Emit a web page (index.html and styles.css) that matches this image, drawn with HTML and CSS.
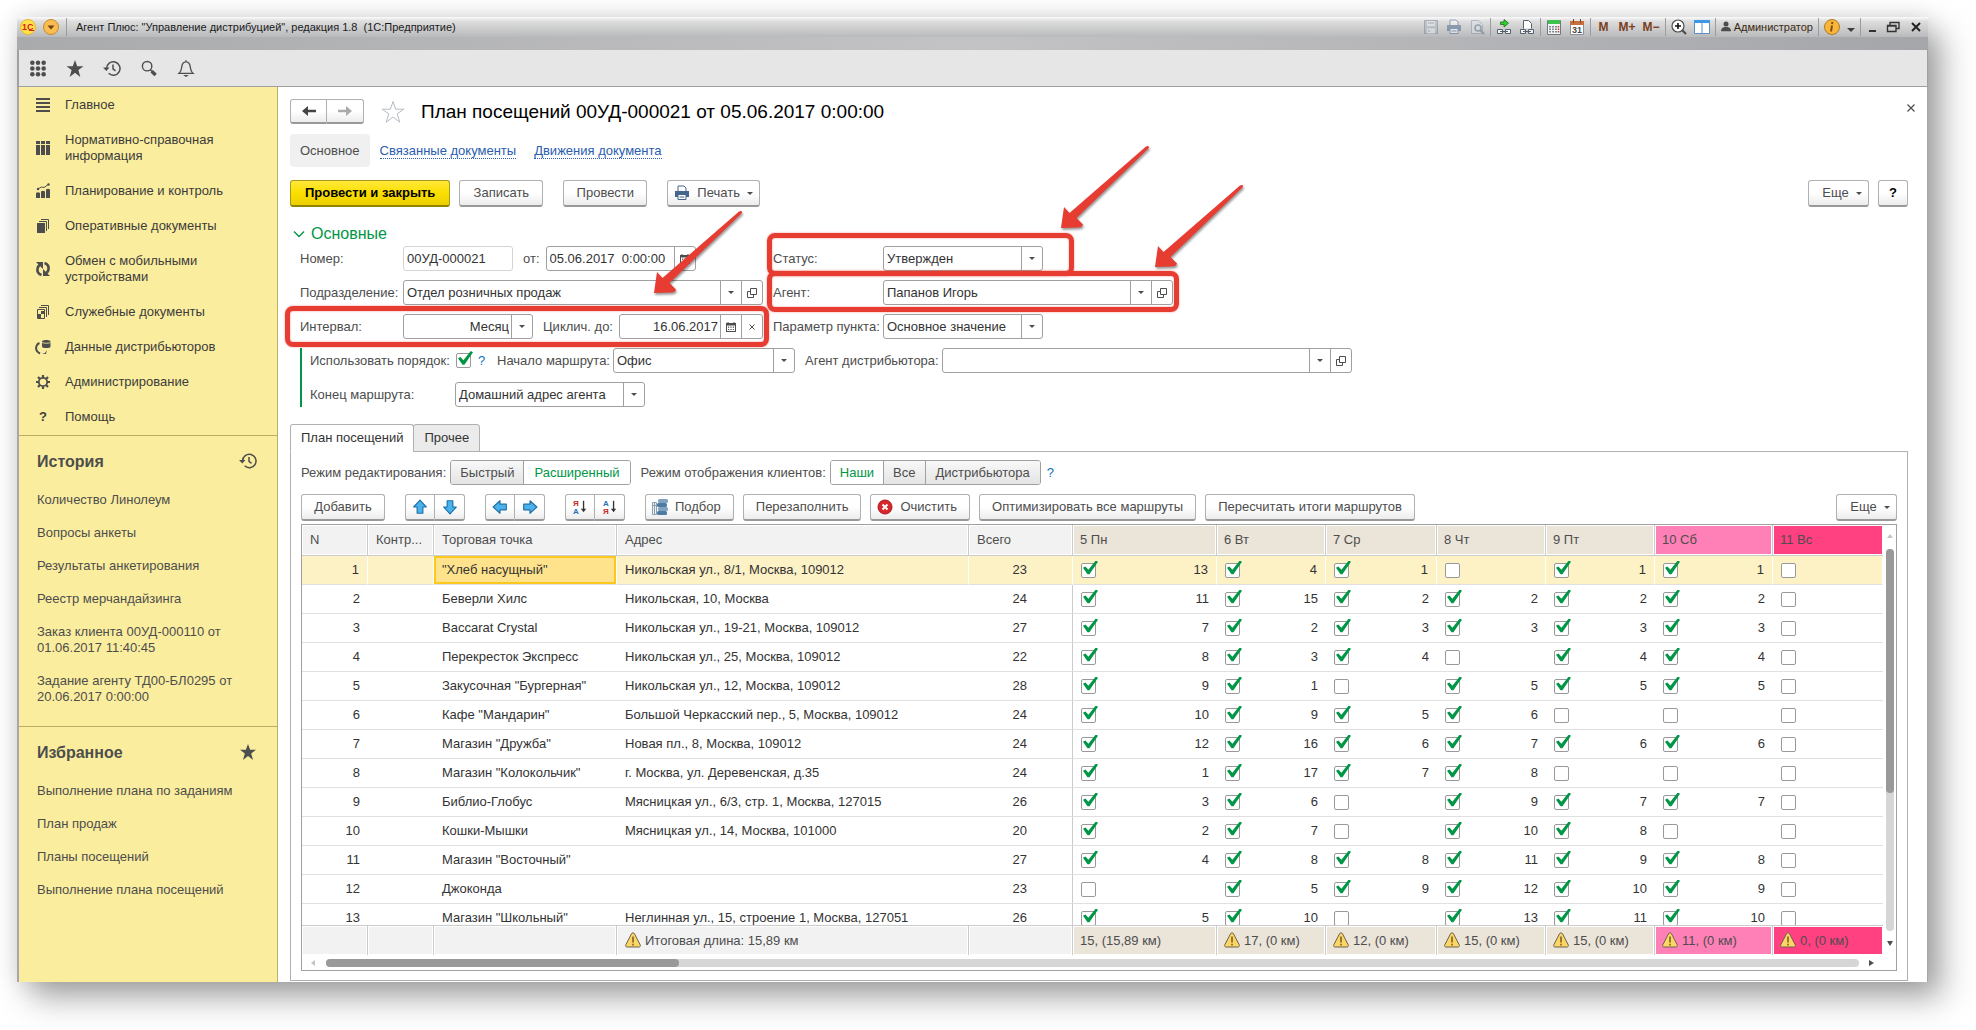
FILE: index.html
```html
<!DOCTYPE html>
<html lang="ru">
<head>
    <meta charset="UTF-8">
    <meta name="viewport" content="width=device-width, initial-scale=1.0">
    <title>Агент Плюс: "Управление дистрибуцией"</title>
    <link rel="stylesheet" href="styles.css">
</head>
<body>
    <!-- Общие иконки -->
    <svg class="sprite" aria-hidden="true">
        <symbol id="i-star" viewBox="0 0 16 16"><path d="M8 0l2.1 5.8H16l-4.8 3.7L13 16l-5-4-5 4 1.800-6.500L0 5.800h5.900z" fill="#4d4d4d"/></symbol>
        <symbol id="i-history" viewBox="0 0 18 16"><g fill="none" stroke="#4d4d4d" stroke-width="1.500"><path d="M3.600 8a6.700 6.700 0 1 1 2 4.800"/><path d="M10 4v4.300l2.500 2"/></g><path d="M0 7h6.500L3.300 10.500z" fill="#4d4d4d"/></symbol>
        <symbol id="i-open" viewBox="0 0 10 10"><path d="M3.500.5h6v6h-6zM3 3.500H.5v6h6V7" fill="none" stroke="#4d4d4d"/></symbol>
        <symbol id="i-cal" viewBox="0 0 10 10"><path d="M0 1h1.500V0h1v1h5V0h1v1H10v9H0z" fill="#4d4d4d"/><path d="M1 3.500h8V9H1z" fill="#fff"/><path d="M2 4.500h1.200v1.200H2zM4.400 4.500h1.200v1.200H4.400zM6.800 4.500H8v1.200H6.800zM2 6.900h1.200v1.200H2zM4.400 6.900h1.200v1.200H4.400zM6.800 6.900H8v1.200H6.800z" fill="#4d4d4d"/></symbol>
        <symbol id="i-warn" viewBox="0 0 16 16"><path d="M8 .8c.7 0 1.200.4 1.500 1l5.700 11c.6 1.200 0 2.200-1.300 2.200H2.100c-1.300 0-1.900-1-1.300-2.200l5.700-11c.3-.6.800-1 1.500-1z" fill="#fcd565" stroke="#6b6250"/><path d="M8 4.500v6M8 11.800v1.600" stroke="#5d4a14" stroke-width="1.300"/></symbol>
        <symbol id="i-up" viewBox="0 0 14 14"><path d="M7 1l5.500 6H9.500v5.500h-5V7h-3z" fill="#4ab3ee" stroke="#1e6fa3" stroke-linejoin="round"/></symbol>
        <symbol id="i-print" viewBox="0 0 16 16"><path d="M4 6V1h6l2 2v3" fill="#fff" stroke="#44668c"/><path d="M1 6h14v6H1z" fill="#44668c"/><path d="M4 9.500h8v5H4z" fill="#fff" stroke="#44668c"/><path d="M5.500 12h5" stroke="#44668c"/></symbol>
        <symbol id="i-arrow" viewBox="0 0 92 92"><path d="M2 85l3-21 5.500 6L87 3.500c2-1.500 4 0 2.500 2L17.500 75l6.500 6.500c-.5 2-2 3-5 3z" fill="#e63c32"/></symbol>
    </svg>

    <div class="window">
        <header class="titlebar">
            <svg class="logo" viewBox="0 0 16 16"><circle cx="8" cy="8" r="7.500" fill="#ffe14a" stroke="#e8b92c"/><text x="2" y="11" class="brand">1С</text><path d="M9 11.500h5" stroke="#d8201c"/></svg>
            <svg class="logo" viewBox="0 0 16 16"><circle cx="8" cy="8" r="7.500" fill="#f9bd52" stroke="#c98b2b"/><path d="M4.500 6.500h7L8 10.500z" fill="#6b4416"/></svg>
            <span class="sep"></span>
            <span class="caption">Агент Плюс: "Управление дистрибуцией", редакция 1.8&nbsp; (1С:Предприятие)</span>
            <div class="sys">
                <svg viewBox="0 0 16 16" opacity=".55"><path d="M1.500 1.500h13v13h-13z" fill="#a9b4bf" stroke="#75828f"/><path d="M4 2h8v5H4zM4 9.500h8v5H4z" fill="#e3e8ec"/><path d="M5 4h6M5 12h2" stroke="#75828f"/></svg>
                <svg viewBox="0 0 16 16" opacity=".5"><use href="#i-print"/></svg>
                <svg viewBox="0 0 16 16" opacity=".55"><path d="M2.500 1.500h7l4 4v9h-11z" fill="#dde2e6" stroke="#8d99a5"/><circle cx="9" cy="9" r="3" fill="none" stroke="#61788f" stroke-width="1.500"/><path d="M11 11l4 4" stroke="#61788f" stroke-width="2"/></svg>
                <span class="sep"></span>
                <svg viewBox="0 0 16 16"><path d="M4.500 3H8V.5l4.500 3.700L8 8V5.500H4.500z" fill="#2fd02f" stroke="#147014" stroke-width=".8"/><path d="M1.500 10.500h5v4h-5zM9.500 10.500h5v4h-5zM4 12.500h8" fill="#f4f7fa" stroke="#55616d"/></svg>
                <svg viewBox="0 0 16 16"><path d="M4.500 9.500v-8h5l3 3v5" fill="#fff" stroke="#55616d"/><path d="M1.500 10.500h5v4h-5zM9.500 10.500h5v4h-5zM4 12.500h8" fill="#f4f7fa" stroke="#55616d"/></svg>
                <span class="sep"></span>
                <svg viewBox="0 0 16 16"><path d="M1.500 1.500h13v14h-13z" fill="#f4f4f4" stroke="#6f7a80"/><path d="M2 1h12v4H2z" fill="#3fc24b"/><path d="M4 7v7M7 7v7M10 7v7" stroke="#59656f" stroke-width="1.500" stroke-dasharray="1.500 1"/><path d="M12.500 7v7" stroke="#c43c2c" stroke-width="1.500" stroke-dasharray="1.500 1"/></svg>
                <svg viewBox="0 0 16 16"><path d="M1.500 2.500h13v13h-13z" fill="#fff" stroke="#8a8f94"/><path d="M1 2h14v4H1z" fill="#c86f3d"/><path d="M4.500 0v4M11.500 0v4" stroke="#7b4427"/><text x="3" y="14" class="day">31</text></svg>
                <span class="sep"></span>
                <button type="button" class="mem">M</button>
                <button type="button" class="mem">M+</button>
                <button type="button" class="mem">M−</button>
                <span class="sep"></span>
                <svg viewBox="0 0 16 16"><circle cx="7" cy="7" r="6" fill="#fff" stroke="#4b4b4b" stroke-width="1.200"/><path d="M7 4v6M4 7h6" stroke="#111" stroke-width="1.600"/><path d="M11 11l4 4" stroke="#4b4b4b" stroke-width="2.200"/></svg>
                <svg viewBox="0 0 16 16"><path d="M.5 1.500h15v13H.5z" fill="#fff" stroke="#5e8fc0"/><path d="M0 1h16v3H0z" fill="#3c97e6"/><path d="M8 4v11" stroke="#5e8fc0"/></svg>
                <span class="sep"></span>
                <span class="user"><svg viewBox="0 0 12 14"><circle cx="6" cy="3.500" r="3" fill="#4c4c4c"/><path d="M0 12c0-3 2-4.500 4-5h4c2 .5 4 2 4 5z" fill="#4c4c4c"/></svg>Администратор</span>
                <span class="sep"></span>
                <svg viewBox="0 0 16 16"><circle cx="8" cy="8" r="7.500" fill="#f7b63e" stroke="#b57a1c"/><path d="M8.500 3L8 5M8 6.500L7 12.500" stroke="#8a4d09" stroke-width="2"/></svg>
                <svg class="tiny" viewBox="0 0 8 16"><path d="M0 9h8l-4 4z" fill="#3f3f3f"/></svg>
                <span class="sep"></span>
                <svg class="min" viewBox="0 0 12 16"><path d="M3 12h7" stroke="#333" stroke-width="2"/></svg>
                <svg viewBox="0 0 16 16"><path d="M5 6V3.500h9v6h-3M2.500 6.500h8.500v6H2.500zM2 7h9" fill="none" stroke="#333" stroke-width="1.400"/></svg>
                <svg viewBox="0 0 16 16"><path d="M4 4l8 8M12 4l-8 8" stroke="#222" stroke-width="2"/></svg>
            </div>
        </header>
        <div class="band"></div>

        <div class="topbar">
            <svg viewBox="0 0 18 18" fill="#4d4d4d"><circle cx="3" cy="3" r="2.400"/><circle cx="9" cy="3" r="2.400"/><circle cx="15" cy="3" r="2.400"/><circle cx="3" cy="9" r="2.400"/><circle cx="9" cy="9" r="2.400"/><circle cx="15" cy="9" r="2.400"/><circle cx="3" cy="15" r="2.400"/><circle cx="9" cy="15" r="2.400"/><circle cx="15" cy="15" r="2.400"/></svg>
            <svg viewBox="0 0 16 16"><use href="#i-star"/></svg>
            <svg viewBox="0 0 18 16"><use href="#i-history"/></svg>
            <svg viewBox="0 0 18 18"><circle cx="7" cy="6.500" r="5" fill="none" stroke="#4d4d4d" stroke-width="1.500"/><path d="M10.500 10.200l2 2" stroke="#4d4d4d" stroke-width="1.500"/><path d="M11.800 11.800l4.200 4" stroke="#4d4d4d" stroke-width="3.600"/></svg>
            <svg viewBox="0 0 18 18"><path d="M1.500 14.200h15c-2-1.700-2.600-3.200-2.900-6.200C13.300 4.500 11.500 2 9 2S4.700 4.500 4.400 8c-.3 3-.9 4.500-2.900 6.200zM9 2V.2" fill="none" stroke="#4d4d4d" stroke-width="1.400"/><path d="M6 16h6l-3 2z" fill="#4d4d4d"/></svg>
        </div>

        <div class="workspace">
            <aside class="sidebar">
                <nav class="menu">
                    <a href="#"><svg viewBox="0 0 16 16"><path d="M1 2h14M1 6h14M1 10h14M1 14h14" stroke="#4d4d4d" stroke-width="2"/></svg>Главное</a>
                    <a href="#"><svg viewBox="0 0 16 16"><path d="M1 1h4v3H1zM6 1h4v3H6zM11 1h4v3h-4zM1 5h4v10H1zM6 5h4v10H6zM11 5h4v10h-4z" fill="#4d4d4d"/></svg>Нормативно-справочная информация</a>
                    <a href="#"><svg viewBox="0 0 16 16"><path d="M1 10q2-1.500 4 0v5H1zM6 8.500q2-1.500 4 0V15H6zM11 6.500q2-1.500 4 0V15h-4z" fill="#4d4d4d"/><path d="M2 6.500L6.500 4 9 4.500 14 1" fill="none" stroke="#4d4d4d"/><circle cx="3" cy="6" r="1.200" fill="#4d4d4d"/><circle cx="13.500" cy="1.500" r="1.200" fill="#4d4d4d"/></svg>Планирование и контроль</a>
                    <a href="#"><svg viewBox="0 0 16 16"><path d="M2 5h8v10H2z" fill="#4d4d4d"/><path d="M4 3.500h7.500V13M6 1.500h7.500V11" fill="none" stroke="#4d4d4d"/></svg>Оперативные документы</a>
                    <a href="#"><svg viewBox="0 0 16 16"><path d="M6.500 14C3.500 13 2 10.500 2.500 7.500 2.700 6 3.500 5 4.500 4M9.500 2c3 1 4.500 3.500 4 6.500-.2 1.500-1 2.500-2 3.500" fill="none" stroke="#4d4d4d" stroke-width="2.600"/><path d="M1 1h7v7zM15 15H8V8z" fill="#4d4d4d"/></svg>Обмен с мобильными устройствами</a>
                    <a href="#"><svg viewBox="0 0 16 16"><path d="M2.500 5.500h7v9h-7zM4 3.500h7.500V13M6 1.500h7.500V11" fill="none" stroke="#4d4d4d"/><path d="M3 10h3v4H3zM6 7h3v3H6z" fill="#4d4d4d"/></svg>Служебные документы</a>
                    <a href="#"><svg viewBox="0 0 16 16"><path d="M5 14.500C2 13 .5 10 1.500 7 2 5.500 3 4.500 4.500 4" fill="none" stroke="#4d4d4d" stroke-width="2"/><path d="M7 2.500C7 .5 15.500.5 15.500 2.500v5c0 2-8.500 2-8.500 0zM12 11l-1 4H7l3-1z" fill="#4d4d4d"/><path d="M7 3.500c2 1 6.500 1 8.500 0" stroke="#fbed9e" fill="none" stroke-width=".8"/></svg>Данные дистрибьюторов</a>
                    <a href="#"><svg viewBox="0 0 16 16"><circle cx="8" cy="8" r="4.200" fill="none" stroke="#4d4d4d" stroke-width="1.800"/><path d="M8 1v2.500M8 12.500V15M1 8h2.500M12.500 8H15M3 3l2 2M11 11l2 2M3 13l2-2M11 5l2-2" stroke="#4d4d4d" stroke-width="2.200"/></svg>Администрирование</a>
                    <a href="#"><b class="q">?</b>Помощь</a>
                </nav>
                <section class="links">
                    <h2>История <svg viewBox="0 0 18 16"><use href="#i-history"/></svg></h2>
                    <a href="#">Количество Линолеум</a>
                    <a href="#">Вопросы анкеты</a>
                    <a href="#">Результаты анкетирования</a>
                    <a href="#">Реестр мерчандайзинга</a>
                    <a href="#">Заказ клиента 00УД-000110 от 01.06.2017 11:40:45</a>
                    <a href="#">Задание агенту ТД00-БЛ0295 от 20.06.2017 0:00:00</a>
                </section>
                <section class="links">
                    <h2>Избранное <svg viewBox="0 0 16 16"><use href="#i-star"/></svg></h2>
                    <a href="#">Выполнение плана по заданиям</a>
                    <a href="#">План продаж</a>
                    <a href="#">Планы посещений</a>
                    <a href="#">Выполнение плана посещений</a>
                </section>
            </aside>

            <main class="doc">
                <div class="doc-head">
                    <div class="group nav-group">
                        <button type="button" class="btn" aria-label="Назад"><svg viewBox="0 0 16 12"><path d="M1 6l6-5v3.800h8v2.400H7V11z" fill="#444"/></svg></button>
                        <button type="button" class="btn" aria-label="Вперед"><svg viewBox="0 0 16 12"><path d="M15 6L9 1v3.800H1v2.400h8V11z" fill="#aaa"/></svg></button>
                    </div>
                    <svg class="fav" viewBox="0 0 24 24"><path d="M12 1.500l2.600 7.700h8.200l-6.600 4.700 2.600 8.300L12 17l-6.800 5.200 2.600-8.300L1.200 9.200h8.200z" fill="#fff" stroke="#b4bcc4"/></svg>
                    <h1>План посещений 00УД-000021 от 05.06.2017 0:00:00</h1>
                    <button type="button" class="close" aria-label="Закрыть"><svg viewBox="0 0 8 8"><path d="M.5.5l7 7M7.500.5l-7 7" stroke="#4d4d4d" stroke-width="1.200"/></svg></button>
                </div>

                <nav class="doc-links">
                    <span class="current">Основное</span>
                    <a href="#">Связанные документы</a>
                    <a href="#">Движения документа</a>
                </nav>

                <div class="commands">
                    <button type="button" class="btn primary">Провести и закрыть</button>
                    <button type="button" class="btn w84">Записать</button>
                    <button type="button" class="btn w84 gap">Провести</button>
                    <button type="button" class="btn gap print"><svg viewBox="0 0 16 16"><use href="#i-print"/></svg>Печать<i class="caret"></i></button>
                    <button type="button" class="btn more">Еще<i class="caret"></i></button>
                    <button type="button" class="btn help">?</button>
                </div>

                <h3 class="group-title"><svg viewBox="0 0 12 8"><path d="M1 1.500l5 5 5-5" fill="none" stroke="#009646" stroke-width="1.400"/></svg>Основные</h3>

                <div class="form">
                    <div class="columns">
                        <div class="col-left">
                            <div class="row">
                                <label for="num">Номер:</label>
                                <div class="field light w110"><input id="num" value="00УД-000021"></div>
                                <label for="date" class="short">от:</label>
                                <div class="field w150"><input id="date" value="05.06.2017&nbsp; 0:00:00"><button type="button" aria-label="Календарь"><svg viewBox="0 0 10 10"><use href="#i-cal"/></svg></button></div>
                            </div>
                            <div class="row">
                                <label for="dept">Подразделение:</label>
                                <div class="field grow"><input id="dept" value="Отдел розничных продаж"><button type="button" aria-label="Выбрать"><i class="caret"></i></button><button type="button" aria-label="Открыть"><svg viewBox="0 0 10 10"><use href="#i-open"/></svg></button></div>
                            </div>
                            <div class="row">
                                <label for="interval">Интервал:</label>
                                <div class="field w130 right"><select id="interval"><option>Месяц</option></select><span class="drop"><i class="caret"></i></span></div>
                                <label for="until" class="short">Циклич. до:</label>
                                <div class="field grow right"><input id="until" value="16.06.2017"><button type="button" aria-label="Календарь"><svg viewBox="0 0 10 10"><use href="#i-cal"/></svg></button><button type="button" aria-label="Очистить"><svg class="x" viewBox="0 0 8 8"><path d="M1.500 1.500l5 5M6.500 1.500l-5 5" stroke="#4d4d4d"/></svg></button></div>
                            </div>
                            <div class="mark mark-interval"></div>
                            <svg class="pointer pointer-interval" viewBox="0 0 92 92"><use href="#i-arrow"/></svg>
                        </div>
                        <div class="col-right">
                            <div class="row">
                                <label for="status">Статус:</label>
                                <div class="field w160"><select id="status"><option>Утвержден</option></select><span class="drop"><i class="caret"></i></span></div>
                            </div>
                            <div class="row">
                                <label for="agent">Агент:</label>
                                <div class="field w290"><input id="agent" value="Папанов Игорь"><button type="button" aria-label="Выбрать"><i class="caret"></i></button><button type="button" aria-label="Открыть"><svg viewBox="0 0 10 10"><use href="#i-open"/></svg></button></div>
                            </div>
                            <div class="row">
                                <label for="param">Параметр пункта:</label>
                                <div class="field w160"><select id="param"><option>Основное значение</option></select><span class="drop"><i class="caret"></i></span></div>
                            </div>
                            <div class="mark mark-status"></div>
                            <div class="mark mark-agent"></div>
                            <svg class="pointer pointer-status" viewBox="0 0 92 92"><use href="#i-arrow"/></svg>
                            <svg class="pointer pointer-agent" viewBox="0 0 92 92"><use href="#i-arrow"/></svg>
                        </div>
                    </div>
                    <div class="order">
                        <div class="row">
                            <label for="order" class="wide check">Использовать порядок:</label>
                            <input type="checkbox" id="order" checked>
                            <a href="#" class="hint">?</a>
                            <label for="start" class="start">Начало маршрута:</label>
                            <div class="field w182"><select id="start"><option>Офис</option></select><span class="drop"><i class="caret"></i></span></div>
                            <label for="dist" class="dist">Агент дистрибьютора:</label>
                            <div class="field w410"><input id="dist" value=""><button type="button" aria-label="Выбрать"><i class="caret"></i></button><button type="button" aria-label="Открыть"><svg viewBox="0 0 10 10"><use href="#i-open"/></svg></button></div>
                        </div>
                        <div class="row">
                            <label for="end" class="wide">Конец маршрута:</label>
                            <div class="field w190"><select id="end"><option>Домашний адрес агента</option></select><span class="drop"><i class="caret"></i></span></div>
                        </div>
                    </div>
                </div>

                <div class="tabs" role="tablist">
                    <button type="button" class="tab active" role="tab">План посещений</button>
                    <button type="button" class="tab" role="tab">Прочее</button>
                </div>

                <section class="panel">
                    <div class="modes">
                        <span>Режим редактирования:</span>
                        <div class="segment">
                            <button type="button" class="tight">Быстрый</button>
                            <button type="button" class="on">Расширенный</button>
                        </div>
                        <span>Режим отображения клиентов:</span>
                        <div class="segment">
                            <button type="button" class="on tight">Наши</button>
                            <button type="button" class="tight">Все</button>
                            <button type="button">Дистрибьютора</button>
                        </div>
                        <a href="#" class="hint">?</a>
                    </div>

                    <div class="commands">
                        <button type="button" class="btn w84">Добавить</button>
                        <div class="group gap">
                            <button type="button" class="btn" aria-label="Вверх"><svg viewBox="0 0 14 14"><use href="#i-up"/></svg></button>
                            <button type="button" class="btn" aria-label="Вниз"><svg viewBox="0 0 14 14" class="r180"><use href="#i-up"/></svg></button>
                        </div>
                        <div class="group gap">
                            <button type="button" class="btn" aria-label="Влево"><svg viewBox="0 0 14 14" class="r270"><use href="#i-up"/></svg></button>
                            <button type="button" class="btn" aria-label="Вправо"><svg viewBox="0 0 14 14" class="r90"><use href="#i-up"/></svg></button>
                        </div>
                        <div class="group gap">
                            <button type="button" class="btn sort" aria-label="По убыванию"><svg viewBox="0 0 16 18"><text x="0" y="8" fill="#c02a2a">Я</text><text x="0" y="17" fill="#2a6fb5">А</text><path d="M12 2v10" stroke="#333" stroke-width="1.500"/><path d="M9 11h6l-3 4z" fill="#333"/></svg></button>
                            <button type="button" class="btn sort" aria-label="По возрастанию"><svg viewBox="0 0 16 18"><text x="0" y="8" fill="#2a6fb5">А</text><text x="0" y="17" fill="#c02a2a">Я</text><path d="M12 2v10" stroke="#333" stroke-width="1.500"/><path d="M9 11h6l-3 4z" fill="#333"/></svg></button>
                        </div>
                        <button type="button" class="btn gap pick"><svg viewBox="0 0 16 16"><path d="M.5 3.500h4v12h-4zM2.500 3.500v12M.5 6.500h4" fill="#eef2f5" stroke="#8fa0ad"/><rect x="6" y="0" width="10" height="4" rx="1.500" fill="#7fa3c1"/><rect x="5" y="4" width="10" height="4" rx="1.500" fill="#4d7ba3"/><rect x="6" y="8" width="10" height="4" rx="1.500" fill="#7fa3c1"/><rect x="5" y="12" width="10" height="4" rx="1.500" fill="#4d7ba3"/></svg>Подбор</button>
                        <button type="button" class="btn">Перезаполнить</button>
                        <button type="button" class="btn pick"><svg viewBox="0 0 16 16"><circle cx="8" cy="8" r="7" fill="#d9262b" stroke="#a81a1e"/><path d="M5.500 5.500l5 5M10.500 5.500l-5 5" stroke="#fff" stroke-width="2"/></svg>Очистить</button>
                        <button type="button" class="btn">Оптимизировать все маршруты</button>
                        <button type="button" class="btn">Пересчитать итоги маршрутов</button>
                        <button type="button" class="btn more">Еще<i class="caret"></i></button>
                    </div>

                    <div class="grid">
                        <div class="grid-main">
                            <div class="grid-scroll">
                                <table>
                                    <colgroup>
                                        <col class="c66"><col class="c66"><col class="c183"><col><col class="c104"><col class="c144"><col class="c109"><col class="c111"><col class="c109"><col class="c109"><col class="c118"><col class="c110">
                                    </colgroup>
                                    <thead>
                                        <tr><th>N</th><th>Контр...</th><th>Торговая точка</th><th>Адрес</th><th>Всего</th><th class="work">5 Пн</th><th class="work">6 Вт</th><th class="work">7 Ср</th><th class="work">8 Чт</th><th class="work">9 Пт</th><th class="sat">10 Сб</th><th class="sun">11 Вс</th></tr>
                                    </thead>
                                    <tbody id="rows"></tbody>
                                    <tfoot>
                                        <tr>
                                            <td></td><td></td><td></td>
                                            <td><svg viewBox="0 0 16 16"><use href="#i-warn"/></svg>Итоговая длина: 15,89 км</td>
                                            <td></td>
                                            <td class="work">15, (15,89 км)</td>
                                            <td class="work"><svg viewBox="0 0 16 16"><use href="#i-warn"/></svg>17, (0 км)</td>
                                            <td class="work"><svg viewBox="0 0 16 16"><use href="#i-warn"/></svg>12, (0 км)</td>
                                            <td class="work"><svg viewBox="0 0 16 16"><use href="#i-warn"/></svg>15, (0 км)</td>
                                            <td class="work"><svg viewBox="0 0 16 16"><use href="#i-warn"/></svg>15, (0 км)</td>
                                            <td class="sat"><svg viewBox="0 0 16 16"><use href="#i-warn"/></svg>11, (0 км)</td>
                                            <td class="sun"><svg viewBox="0 0 16 16"><use href="#i-warn"/></svg>0, (0 км)</td>
                                        </tr>
                                    </tfoot>
                                </table>
                            </div>
                            <div class="vbar"><svg viewBox="0 0 6 5"><path d="M0 4h6L3 0z" fill="#c4c4c4"/></svg><div class="track"><div class="thumb"></div></div><svg viewBox="0 0 6 5"><path d="M0 0h6L3 5z" fill="#4d4d4d"/></svg></div>
                        </div>
                        <div class="hbar"><svg viewBox="0 0 5 6"><path d="M4 0v6L0 3z" fill="#c4c4c4"/></svg><div class="track"><div class="thumb"></div></div><svg viewBox="0 0 5 6"><path d="M0 0v6l5-3z" fill="#4d4d4d"/></svg></div>
                    </div>
                </section>
            </main>
        </div>
    </div>

    <script>
        // Точка, адрес, всего, порядок обхода по дням (0 - не посещается)
        const rows = [
            ['"Хлеб насущный"', 'Никольская ул., 8/1, Москва, 109012', 23, [13, 4, 1, 0, 1, 1, 0]],
            ['Беверли Хилс', 'Никольская, 10, Москва', 24, [11, 15, 2, 2, 2, 2, 0]],
            ['Baccarat Crystal', 'Никольская ул., 19-21, Москва, 109012', 27, [7, 2, 3, 3, 3, 3, 0]],
            ['Перекресток Экспресс', 'Никольская ул., 25, Москва, 109012', 22, [8, 3, 4, 0, 4, 4, 0]],
            ['Закусочная "Бургерная"', 'Никольская ул., 12, Москва, 109012', 28, [9, 1, 0, 5, 5, 5, 0]],
            ['Кафе "Мандарин"', 'Большой Черкасский пер., 5, Москва, 109012', 24, [10, 9, 5, 6, 0, 0, 0]],
            ['Магазин "Дружба"', 'Новая пл., 8, Москва, 109012', 24, [12, 16, 6, 7, 6, 6, 0]],
            ['Магазин "Колокольчик"', 'г. Москва, ул. Деревенская, д.35', 24, [1, 17, 7, 8, 0, 0, 0]],
            ['Библио-Глобус', 'Мясницкая ул., 6/3, стр. 1, Москва, 127015', 26, [3, 6, 0, 9, 7, 7, 0]],
            ['Кошки-Мышки', 'Мясницкая ул., 14, Москва, 101000', 20, [2, 7, 0, 10, 8, 0, 0]],
            ['Магазин "Восточный"', '', 27, [4, 8, 8, 11, 9, 8, 0]],
            ['Джоконда', '', 23, [0, 5, 9, 12, 10, 9, 0]],
            ['Магазин "Школьный"', 'Неглинная ул., 15, строение 1, Москва, 127051', 26, [5, 10, 0, 13, 11, 10, 0]]
        ];

        const body = document.getElementById('rows');
        rows.forEach(function(row, i) {
            const days = row[3].map(function(n, d) {
                return '<td><label class="day-cell"><input type="checkbox" aria-label="День ' + (d + 5) + '"' + (n ? ' checked' : '') + '>' + (n || '') + '</label></td>';
            }).join('');
            body.insertAdjacentHTML('beforeend',
                '<tr' + (i === 0 ? ' class="selected"' : '') + '><td class="num">' + (i + 1) + '</td><td></td><td class="point">' + row[0] + '</td><td>' + row[1] + '</td><td class="total">' + row[2] + '</td>' + days + '</tr>');
        });
    </script>
</body>
</html>
```
FILE: styles.css
```css
* {
    box-sizing: border-box;
}

body {
    margin: 0;
    padding: 17px 48px 48px 17px;
    height: 100vh;
    display: flex;
    background: #fff;
    color: #4d4d4d;
    font: 13px/16px "Liberation Sans", Arial, sans-serif;
    overflow: hidden;
}

button, input, select {
    font: inherit;
    color: inherit;
    margin: 0;
}

svg {
    flex: none;
    display: block;
}

.sprite {
    position: absolute;
    width: 0;
    height: 0;
}

.window {
    flex: 1;
    min-width: 0;
    display: flex;
    flex-direction: column;
    background: #fff;
    box-shadow: 14px 16px 30px rgba(0, 0, 0, 0.34), 0 0 22px rgba(0, 0, 0, 0.12);
}

/* Заголовок окна */
.titlebar {
    display: flex;
    align-items: center;
    gap: 7px;
    height: 20px;
    padding: 0 4px 0 3px;
    background: linear-gradient(#fbfbfb 0, #dedede 20%, #b9babc 100%);
    color: #1a1a1a;
    font-size: 11px;
}

.logo {
    width: 16px;
    height: 16px;
}

.brand {
    font-size: 9px;
    font-weight: bold;
    fill: #d8201c;
}

.sep {
    width: 1px;
    height: 18px;
    background: #9c9c9c;
}

.caption {
    padding-left: 2px;
    white-space: nowrap;
}

.sys {
    margin-left: auto;
    display: flex;
    align-items: center;
    gap: 7px;
}

.sys .sep {
    margin: 0 -2px;
}

.sys svg {
    width: 16px;
    height: 16px;
}

.sys .tiny {
    width: 8px;
}

.sys .min {
    width: 12px;
}

.sys .user {
    display: flex;
    align-items: center;
    gap: 3px;
    color: #3a2a10;
}

.sys .user svg {
    width: 10px;
    height: 12px;
}

.day {
    font-size: 9px;
    font-weight: bold;
    fill: #4a4a4a;
}

.mem {
    min-width: 16px;
    padding: 0;
    border: 0;
    background: none;
    color: #7b3f1d;
    font-size: 12px;
    font-weight: bold;
}

.band {
    height: 13px;
    background: linear-gradient(90deg, #a9aaac, #c3c3c5 50%, #a5a6aa);
}

.topbar {
    display: flex;
    align-items: center;
    gap: 19px;
    height: 37px;
    padding-left: 10px;
    background: #e6e6e6;
    border: solid #a0a0a0;
    border-width: 0 1px 1px 2px;
}

.topbar svg {
    width: 18px;
    height: 17px;
}

.workspace {
    flex: 1;
    min-height: 0;
    display: flex;
    border: solid #a8a8ac;
    border-width: 0 1px 0 2px;
}

/* Левая панель */
.sidebar {
    flex: none;
    width: 259px;
    background: #fbed9e;
    border-right: 1px solid #bcae66;
}

.sidebar a {
    color: #3c3c3c;
    text-decoration: none;
}

.menu {
    padding-top: 1px;
}

.menu a {
    display: flex;
    align-items: center;
    gap: 14px;
    min-height: 35px;
    padding: 9px 48px 10px 16px;
}

.menu svg, .q {
    flex: none;
    width: 16px;
    height: 16px;
    text-align: center;
}

.links {
    border-top: 1px solid #bcae66;
    padding-bottom: 12px;
}

.links h2 {
    display: flex;
    justify-content: space-between;
    margin: 0;
    padding: 17px 20px 13px 18px;
    font-size: 16px;
    line-height: 18px;
}

.links h2 svg {
    width: 18px;
    height: 16px;
}

.links a {
    display: block;
    padding: 8px 30px 9px 18px;
    color: #4d4d4d;
}

/* Документ */
.doc {
    flex: 1;
    min-width: 0;
    display: flex;
    flex-direction: column;
    padding: 12px 19px 1px 12px;
}

.doc-head {
    display: flex;
    align-items: center;
    height: 25px;
}

.doc-head h1 {
    margin: 0 auto 0 16px;
    font-size: 19px;
    line-height: 24px;
    font-weight: normal;
    color: #000;
}

.fav {
    width: 24px;
    height: 24px;
    margin-left: 17px;
}

.close {
    padding: 0;
    border: 0;
    background: none;
}

.close svg {
    width: 8px;
    height: 8px;
    margin-right: -7px;
    margin-top: -8px;
}

.doc-links {
    display: flex;
    align-items: center;
    gap: 18px;
    margin-top: 10px;
}

.doc-links .current {
    margin-right: -8px;
    padding: 9px 10px 8px;
    border-radius: 4px;
    background: #f0f0f0;
}

.doc-links a {
    color: #2a5db0;
    text-decoration: none;
    border-bottom: 1px dotted #2a5db0;
    line-height: 14px;
    margin-top: 2px;
}

.commands {
    display: flex;
    gap: 9px;
    margin-top: 13px;
}

.btn {
    display: flex;
    align-items: center;
    justify-content: center;
    height: 27px;
    padding: 0 12px;
    border: 1px solid #b0b0b0;
    border-bottom: 2px solid #999;
    border-radius: 3px;
    background: linear-gradient(#fff 50%, #ececec);
    white-space: nowrap;
}

.btn.w84 {
    width: 84px;
    padding: 0;
}

.btn.gap, .group.gap {
    margin-left: 11px;
}

.btn svg {
    width: 16px;
    height: 16px;
    margin-right: 7px;
}

.btn.pick {
    padding: 0 12px 0 6px;
}

.btn.print {
    padding: 0 6px;
}

.btn.primary {
    padding: 0 14px;
    background: linear-gradient(#ffe83a, #fbdf00 50%, #edcf00);
    border-color: #a69a1c;
    border-bottom-color: #8f8300;
    color: #000;
    font-weight: bold;
}

.caret {
    border: 3px solid transparent;
    border-top-color: #4d4d4d;
    border-bottom: 0;
}

.btn .caret {
    margin-left: 7px;
}

.btn.more {
    width: 61px;
    margin-left: auto;
    padding: 0 5px 0 12px;
}

.btn.help {
    width: 30px;
    padding: 0;
    color: #000;
    font-weight: bold;
}

.group {
    display: flex;
}

.group .btn {
    width: 30px;
    padding: 0;
}

.group .btn + .btn {
    border-left: 0;
    border-radius: 0 3px 3px 0;
}

.group .btn:first-child {
    border-radius: 3px 0 0 3px;
}

.group .btn svg {
    margin: 0;
}

.nav-group .btn {
    width: 37px;
    height: 25px;
}

.nav-group .btn svg {
    height: 12px;
}

.sort text {
    font-size: 9px;
    font-weight: bold;
}

.r90 { transform: rotate(90deg); }
.r180 { transform: rotate(180deg); }
.r270 { transform: rotate(270deg); }

.group-title {
    display: flex;
    align-items: center;
    gap: 6px;
    margin: 14px 0 0 3px;
    height: 25px;
    font-size: 16px;
    font-weight: normal;
    color: #009646;
}

.group-title svg {
    width: 12px;
    height: 8px;
}

/* Поля формы */
.form {
    padding-left: 10px;
}

.columns {
    display: flex;
    gap: 10px;
}

.col-left, .col-right {
    position: relative;
    display: flex;
    flex-direction: column;
    gap: 9px;
}

.col-left {
    width: 463px;
}

.row {
    display: flex;
    align-items: center;
    height: 25px;
    white-space: nowrap;
}

.col-left label {
    width: 103px;
}

.col-right label {
    width: 110px;
}

.row .short {
    width: auto;
    padding: 0 6px 0 10px;
}

.field {
    display: flex;
    height: 25px;
    border: 1px solid #a0a0a0;
    border-radius: 3px;
    background: #fff;
    color: #333;
}

.field.light {
    border-color: #d4d4d4;
}

.grow {
    flex: 1;
    min-width: 0;
}

.w110 { width: 110px; }
.w130 { width: 130px; }
.w150 { width: 150px; }
.w160 { width: 160px; }
.w182 { width: 182px; }
.w190 { width: 190px; }
.w290 { width: 290px; }
.w410 { width: 410px; }

.field input, .field select {
    flex: 1;
    min-width: 0;
    padding: 0 3px;
    border: 0;
    outline: 0;
    background: none;
    appearance: none;
}

.field.right input, .field.right select {
    padding: 0 2px;
    text-align: right;
    text-align-last: right;
}

.field button, .drop {
    flex: none;
    display: flex;
    align-items: center;
    justify-content: center;
    width: 21px;
    padding: 0;
    border: 0;
    border-left: 1px solid #a0a0a0;
    background: none;
}

.field svg {
    width: 10px;
    height: 10px;
}

.field .x {
    width: 8px;
    height: 8px;
}

.order {
    display: flex;
    flex-direction: column;
    gap: 9px;
    margin-top: 9px;
    padding-left: 8px;
    border-left: 2px solid #009646;
}

.order .wide {
    width: 145px;
}

.order .check {
    width: 146px;
}

.order .start {
    width: 116px;
}

.order .dist {
    padding-left: 10px;
    width: 147px;
}

.hint {
    color: #0a72c0;
    text-decoration: none;
}

.order .hint {
    width: 26px;
    padding-left: 7px;
}

.modes .hint {
    margin-left: -4px;
}

input[type="checkbox"] {
    flex: none;
    position: relative;
    width: 15px;
    height: 15px;
    border: 1px solid #999;
    border-radius: 2px;
    background: #fff;
    appearance: none;
}

/* Галочка выходит за рамку флажка */
input[type="checkbox"]:checked::after {
    content: "";
    position: absolute;
    left: 1px;
    top: -3px;
    width: 15px;
    height: 14px;
    background: #009646;
    clip-path: polygon(0 52%, 16% 43%, 36% 66%, 85% 0, 100% 9%, 43% 98%, 30% 98%);
}

/* Красные пометки поверх формы */
.mark {
    position: absolute;
    border: 5px solid #e63c32;
    border-radius: 8px;
    box-shadow: 0 0 2px rgba(230, 60, 50, 0.6), inset 0 0 2px rgba(230, 60, 50, 0.6);
    pointer-events: none;
}

.mark-interval {
    left: -15px;
    right: -6px;
    top: 60px;
    height: 41px;
}

.mark-status {
    left: -6px;
    top: -13px;
    width: 307px;
    height: 43px;
}

.mark-agent {
    left: -6px;
    top: 25px;
    width: 412px;
    height: 41px;
}

.pointer {
    position: absolute;
    width: 92px;
    height: 92px;
    filter: drop-shadow(1px 2px 1px rgba(0, 0, 0, 0.4));
    pointer-events: none;
}

.pointer-interval {
    left: 352px;
    top: -38px;
}

.pointer-status {
    left: 286px;
    top: -103px;
}

.pointer-agent {
    left: 380px;
    top: -64px;
}

/* Вкладки */
.tabs {
    display: flex;
    margin-top: 17px;
    position: relative;
}

.tab {
    height: 28px;
    padding: 0 10px;
    margin-right: -1px;
    border: 1px solid #b0b0b0;
    border-radius: 3px 3px 0 0;
    background: #ebebeb;
    color: #333;
}

.tab.active {
    background: #fff;
    border-bottom-color: #fff;
}

.panel {
    flex: 1;
    min-height: 0;
    display: flex;
    flex-direction: column;
    margin-top: -1px;
    padding: 8px 10px 9px;
    border: 1px solid #b0b0b0;
}

.modes {
    display: flex;
    align-items: center;
    white-space: nowrap;
}

.segment {
    display: flex;
    height: 25px;
    margin: 0 10px 0 4px;
    border: 1px solid #a0a0a0;
    border-radius: 3px;
    overflow: hidden;
}

.segment button {
    padding: 0 10px;
    border: 0;
    background: linear-gradient(#f8f8f8, #e4e4e4);
}

.segment button.tight {
    padding: 0 9px;
}

.segment button + button {
    border-left: 1px solid #a0a0a0;
}

.segment button.on {
    background: #fff;
    color: #009646;
}

.panel .commands {
    margin-top: 9px;
}

/* Таблица */
.grid {
    flex: 1;
    min-height: 0;
    display: flex;
    flex-direction: column;
    margin-top: 3px;
    border: 1px solid #a0a0a0;
}

.grid-main {
    flex: 1;
    min-height: 0;
    display: flex;
}

.grid-scroll {
    flex: 1;
    min-width: 0;
    overflow: hidden;
}

table {
    width: 100%;
    table-layout: fixed;
    border-spacing: 0;
    color: #333;
}

.c66 { width: 66px; }
.c104 { width: 104px; }
.c109 { width: 109px; }
.c110 { width: 110px; }
.c111 { width: 111px; }
.c118 { width: 118px; }
.c144 { width: 144px; }
.c183 { width: 183px; }

th, td {
    height: 29px;
    padding: 0 8px;
    text-align: left;
    white-space: nowrap;
    overflow: hidden;
}

th, tfoot td {
    position: sticky;
    z-index: 1;
    background: #f2f2f2;
    box-shadow: inset 0 0 0 1px #fff;
    border-right: 1px solid #ccc;
    color: #4d4d4d;
    font-weight: normal;
}

th {
    top: 0;
    height: 31px;
    border-bottom: 1px solid #ccc;
}

tfoot td {
    bottom: 0;
    height: 30px;
    border-top: 1px solid #ccc;
}

th:last-child, tfoot td:last-child {
    border-right: 0;
}

tfoot svg {
    display: inline-block;
    width: 16px;
    height: 16px;
    margin-right: 4px;
    vertical-align: -3px;
}

tr .work, tr .sat, tr .sun {
    padding-left: 7px;
}

tr .work { background: #eae4d9; }
tr .sat { background: #ff80b7; }
tr .sun { background: #ff4081; }

tbody td {
    border-bottom: 1px solid #e0e0e0;
}

tbody .num {
    text-align: right;
}

tbody .total {
    padding-right: 45px;
    text-align: right;
    border-right: 1px solid #ccc;
}

.selected td {
    background: #fdf1c6;
    border-right: 1px solid #fff;
}

.selected .point {
    background: #ffe38c;
    box-shadow: inset 0 0 0 2px #fcc81f;
}

.day-cell {
    display: flex;
    align-items: center;
    justify-content: space-between;
}

.vbar {
    flex: none;
    display: flex;
    flex-direction: column;
    align-items: center;
    gap: 10px;
    width: 13px;
    padding: 9px 0;
}

.vbar svg {
    width: 6px;
    height: 5px;
}

.track {
    flex: 1;
    border-radius: 4px;
    background: #d6d6d6;
}

.thumb {
    border-radius: 4px;
    background: #999;
}

.vbar .track {
    width: 8px;
}

.vbar .thumb {
    height: 64%;
}

.hbar {
    display: flex;
    align-items: center;
    gap: 10px;
    height: 15px;
    padding: 0 22px 0 9px;
}

.hbar svg {
    width: 5px;
    height: 6px;
}

.hbar .track {
    height: 8px;
}

.hbar .thumb {
    width: 23%;
    height: 8px;
}
```
